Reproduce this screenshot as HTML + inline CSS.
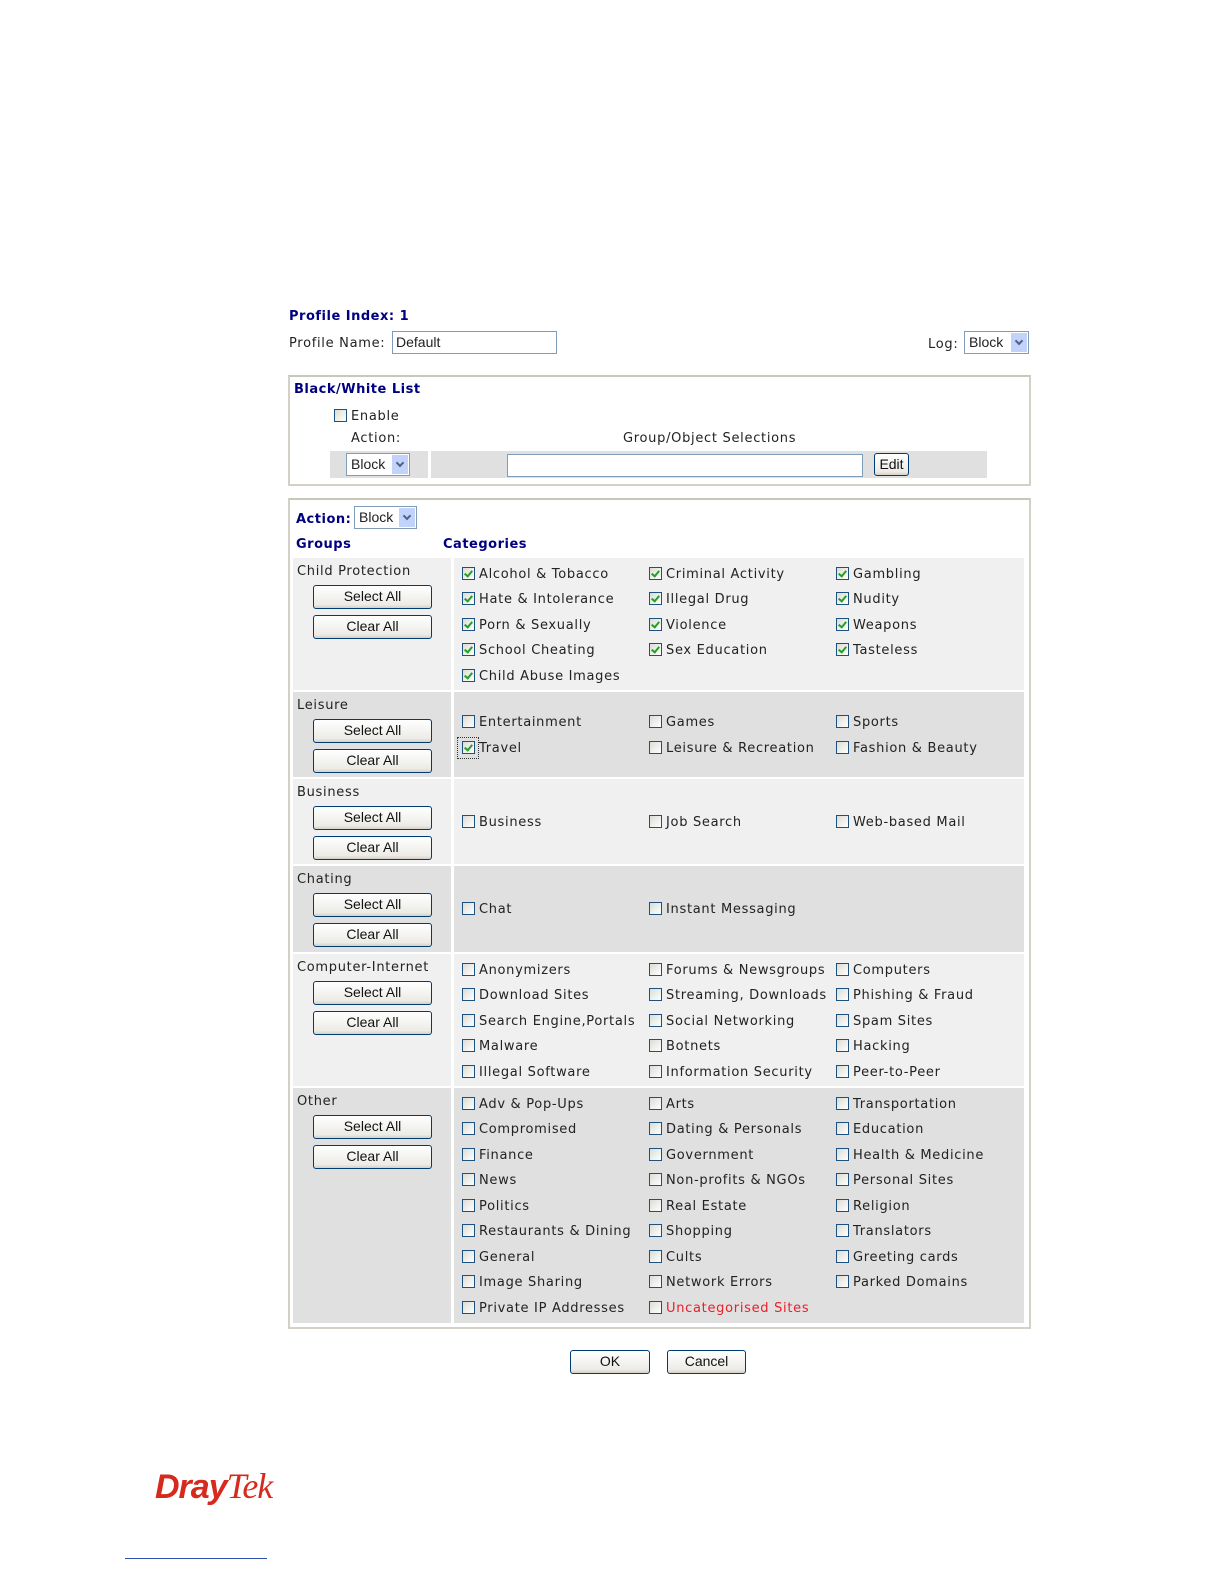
<!DOCTYPE html>
<html><head><meta charset="utf-8"><style>
*{margin:0;padding:0;box-sizing:border-box}
html,body{width:1224px;height:1584px;overflow:hidden}
body{background:#fff;position:relative;font-family:"DejaVu Sans","Liberation Sans",sans-serif;font-size:13px;color:#222;letter-spacing:0.7px}
.a{position:absolute;white-space:nowrap;line-height:18px}
.h{color:#000080;font-weight:bold;letter-spacing:0.5px}
.cb{display:inline-block;width:13px;height:13px;border:1px solid #1c5180;background:linear-gradient(135deg,#dcdcd6,#fff);vertical-align:-2px;margin-right:4px;position:relative}
.ck::after{content:"";position:absolute;left:3px;top:1px;width:3px;height:6px;border:solid #21a121;border-width:0 2px 2px 0;transform:rotate(40deg)}
.btn{position:absolute;border:1px solid #003c74;border-radius:3px;background:linear-gradient(#fff,#ecebe6 85%,#d6d0c5);font-family:"Liberation Sans",sans-serif;font-size:14px;text-align:center;line-height:20px;color:#111;letter-spacing:0}
.sel{position:absolute;border:1px solid #7f9db9;background:#fff;font-family:"Liberation Sans",sans-serif;font-size:14px;line-height:20px;padding-left:4px;letter-spacing:0}
.sel i{position:absolute;right:1px;top:1px;width:16px;bottom:1px;background:#c1d3fb}
.sel i::after{content:"";position:absolute;left:5px;top:5px;width:4px;height:4px;border:solid #4d6185;border-width:0 2px 2px 0;transform:rotate(45deg)}
.inp{position:absolute;border:1px solid #7f9db9;background:#fff;font-family:"Liberation Sans",sans-serif;font-size:14px;line-height:20px;padding-left:3px;letter-spacing:0}
.bg{position:absolute}
</style></head><body>
<div class="a h" style="left:289px;top:308px">Profile Index: 1</div>
<div class="a" style="left:289px;top:335px">Profile Name:</div>
<div class="inp" style="left:392px;top:331px;width:165px;height:23px">Default</div>
<div class="a" style="left:928px;top:336px">Log:</div>
<div class="sel" style="left:964px;top:331px;width:65px;height:23px">Block<i></i></div>

<div class="bg" style="left:288px;top:375px;width:743px;height:111px;border:2px solid #d4d0c8;border-top-color:#c8c8b8"></div>
<div class="a h" style="left:294px;top:381px">Black/White List</div>
<div class="a" style="left:334px;top:408px"><span class="cb"></span>Enable</div>
<div class="a" style="left:351px;top:430px">Action:</div>
<div class="a" style="left:623px;top:430px">Group/Object Selections</div>
<div class="bg" style="left:330px;top:451px;width:98px;height:27px;background:#e0e0e0"></div>
<div class="bg" style="left:431px;top:451px;width:556px;height:27px;background:#e0e0e0"></div>
<div class="sel" style="left:346px;top:453px;width:64px;height:23px">Block<i></i></div>
<div class="inp" style="left:507px;top:454px;width:356px;height:23px"></div>
<div class="btn" style="left:874px;top:453px;width:35px;height:23px;font-size:14px">Edit</div>

<div class="bg" style="left:288px;top:498px;width:743px;height:831px;border:2px solid #d4d0c8;border-top-color:#c8c8b8"></div>
<div class="a h" style="left:296px;top:511px">Action:</div>
<div class="sel" style="left:354px;top:506px;width:63px;height:23px">Block<i></i></div>
<div class="a h" style="left:296px;top:536px">Groups</div>
<div class="a h" style="left:443px;top:536px">Categories</div>

<div class="bg" style="left:293px;top:558px;width:158px;height:132px;background:#f0f0f0"></div>
<div class="bg" style="left:454px;top:558px;width:570px;height:132px;background:#f0f0f0"></div>
<div class="bg" style="left:293px;top:692px;width:158px;height:85px;background:#e0e0e0"></div>
<div class="bg" style="left:454px;top:692px;width:570px;height:85px;background:#e0e0e0"></div>
<div class="bg" style="left:293px;top:779px;width:158px;height:85px;background:#f0f0f0"></div>
<div class="bg" style="left:454px;top:779px;width:570px;height:85px;background:#f0f0f0"></div>
<div class="bg" style="left:293px;top:866px;width:158px;height:86px;background:#e0e0e0"></div>
<div class="bg" style="left:454px;top:866px;width:570px;height:86px;background:#e0e0e0"></div>
<div class="bg" style="left:293px;top:954px;width:158px;height:132px;background:#f0f0f0"></div>
<div class="bg" style="left:454px;top:954px;width:570px;height:132px;background:#f0f0f0"></div>
<div class="bg" style="left:293px;top:1088px;width:158px;height:235px;background:#e0e0e0"></div>
<div class="bg" style="left:454px;top:1088px;width:570px;height:235px;background:#e0e0e0"></div>

<div class="a" style="left:297px;top:563px">Child Protection</div>
<div class="btn" style="left:313px;top:585px;width:119px;height:24px">Select All</div>
<div class="btn" style="left:313px;top:615px;width:119px;height:24px">Clear All</div>
<div class="a" style="left:297px;top:697px">Leisure</div>
<div class="btn" style="left:313px;top:719px;width:119px;height:24px">Select All</div>
<div class="btn" style="left:313px;top:749px;width:119px;height:24px">Clear All</div>
<div class="a" style="left:297px;top:784px">Business</div>
<div class="btn" style="left:313px;top:806px;width:119px;height:24px">Select All</div>
<div class="btn" style="left:313px;top:836px;width:119px;height:24px">Clear All</div>
<div class="a" style="left:297px;top:871px">Chating</div>
<div class="btn" style="left:313px;top:893px;width:119px;height:24px">Select All</div>
<div class="btn" style="left:313px;top:923px;width:119px;height:24px">Clear All</div>
<div class="a" style="left:297px;top:959px">Computer-Internet</div>
<div class="btn" style="left:313px;top:981px;width:119px;height:24px">Select All</div>
<div class="btn" style="left:313px;top:1011px;width:119px;height:24px">Clear All</div>
<div class="a" style="left:297px;top:1093px">Other</div>
<div class="btn" style="left:313px;top:1115px;width:119px;height:24px">Select All</div>
<div class="btn" style="left:313px;top:1145px;width:119px;height:24px">Clear All</div>

<div class="a" style="left:462px;top:566px"><span class="cb ck"></span>Alcohol &amp; Tobacco</div>
<div class="a" style="left:649px;top:566px"><span class="cb ck"></span>Criminal Activity</div>
<div class="a" style="left:836px;top:566px"><span class="cb ck"></span>Gambling</div>
<div class="a" style="left:462px;top:591px"><span class="cb ck"></span>Hate &amp; Intolerance</div>
<div class="a" style="left:649px;top:591px"><span class="cb ck"></span>Illegal Drug</div>
<div class="a" style="left:836px;top:591px"><span class="cb ck"></span>Nudity</div>
<div class="a" style="left:462px;top:617px"><span class="cb ck"></span>Porn &amp; Sexually</div>
<div class="a" style="left:649px;top:617px"><span class="cb ck"></span>Violence</div>
<div class="a" style="left:836px;top:617px"><span class="cb ck"></span>Weapons</div>
<div class="a" style="left:462px;top:642px"><span class="cb ck"></span>School Cheating</div>
<div class="a" style="left:649px;top:642px"><span class="cb ck"></span>Sex Education</div>
<div class="a" style="left:836px;top:642px"><span class="cb ck"></span>Tasteless</div>
<div class="a" style="left:462px;top:668px"><span class="cb ck"></span>Child Abuse Images</div>
<div class="a" style="left:462px;top:714px"><span class="cb"></span>Entertainment</div>
<div class="a" style="left:649px;top:714px"><span class="cb"></span>Games</div>
<div class="a" style="left:836px;top:714px"><span class="cb"></span>Sports</div>
<div class="bg" style="left:457px;top:737px;width:22px;height:22px;border:1px dotted #333"></div>
<div class="a" style="left:462px;top:740px"><span class="cb ck"></span>Travel</div>
<div class="a" style="left:649px;top:740px"><span class="cb"></span>Leisure &amp; Recreation</div>
<div class="a" style="left:836px;top:740px"><span class="cb"></span>Fashion &amp; Beauty</div>
<div class="a" style="left:462px;top:814px"><span class="cb"></span>Business</div>
<div class="a" style="left:649px;top:814px"><span class="cb"></span>Job Search</div>
<div class="a" style="left:836px;top:814px"><span class="cb"></span>Web-based Mail</div>
<div class="a" style="left:462px;top:901px"><span class="cb"></span>Chat</div>
<div class="a" style="left:649px;top:901px"><span class="cb"></span>Instant Messaging</div>
<div class="a" style="left:462px;top:962px"><span class="cb"></span>Anonymizers</div>
<div class="a" style="left:649px;top:962px"><span class="cb"></span>Forums &amp; Newsgroups</div>
<div class="a" style="left:836px;top:962px"><span class="cb"></span>Computers</div>
<div class="a" style="left:462px;top:987px"><span class="cb"></span>Download Sites</div>
<div class="a" style="left:649px;top:987px"><span class="cb"></span>Streaming, Downloads</div>
<div class="a" style="left:836px;top:987px"><span class="cb"></span>Phishing &amp; Fraud</div>
<div class="a" style="left:462px;top:1013px"><span class="cb"></span>Search Engine,Portals</div>
<div class="a" style="left:649px;top:1013px"><span class="cb"></span>Social Networking</div>
<div class="a" style="left:836px;top:1013px"><span class="cb"></span>Spam Sites</div>
<div class="a" style="left:462px;top:1038px"><span class="cb"></span>Malware</div>
<div class="a" style="left:649px;top:1038px"><span class="cb"></span>Botnets</div>
<div class="a" style="left:836px;top:1038px"><span class="cb"></span>Hacking</div>
<div class="a" style="left:462px;top:1064px"><span class="cb"></span>Illegal Software</div>
<div class="a" style="left:649px;top:1064px"><span class="cb"></span>Information Security</div>
<div class="a" style="left:836px;top:1064px"><span class="cb"></span>Peer-to-Peer</div>
<div class="a" style="left:462px;top:1096px"><span class="cb"></span>Adv &amp; Pop-Ups</div>
<div class="a" style="left:649px;top:1096px"><span class="cb"></span>Arts</div>
<div class="a" style="left:836px;top:1096px"><span class="cb"></span>Transportation</div>
<div class="a" style="left:462px;top:1121px"><span class="cb"></span>Compromised</div>
<div class="a" style="left:649px;top:1121px"><span class="cb"></span>Dating &amp; Personals</div>
<div class="a" style="left:836px;top:1121px"><span class="cb"></span>Education</div>
<div class="a" style="left:462px;top:1147px"><span class="cb"></span>Finance</div>
<div class="a" style="left:649px;top:1147px"><span class="cb"></span>Government</div>
<div class="a" style="left:836px;top:1147px"><span class="cb"></span>Health &amp; Medicine</div>
<div class="a" style="left:462px;top:1172px"><span class="cb"></span>News</div>
<div class="a" style="left:649px;top:1172px"><span class="cb"></span>Non-profits &amp; NGOs</div>
<div class="a" style="left:836px;top:1172px"><span class="cb"></span>Personal Sites</div>
<div class="a" style="left:462px;top:1198px"><span class="cb"></span>Politics</div>
<div class="a" style="left:649px;top:1198px"><span class="cb"></span>Real Estate</div>
<div class="a" style="left:836px;top:1198px"><span class="cb"></span>Religion</div>
<div class="a" style="left:462px;top:1223px"><span class="cb"></span>Restaurants &amp; Dining</div>
<div class="a" style="left:649px;top:1223px"><span class="cb"></span>Shopping</div>
<div class="a" style="left:836px;top:1223px"><span class="cb"></span>Translators</div>
<div class="a" style="left:462px;top:1249px"><span class="cb"></span>General</div>
<div class="a" style="left:649px;top:1249px"><span class="cb"></span>Cults</div>
<div class="a" style="left:836px;top:1249px"><span class="cb"></span>Greeting cards</div>
<div class="a" style="left:462px;top:1274px"><span class="cb"></span>Image Sharing</div>
<div class="a" style="left:649px;top:1274px"><span class="cb"></span>Network Errors</div>
<div class="a" style="left:836px;top:1274px"><span class="cb"></span>Parked Domains</div>
<div class="a" style="left:462px;top:1300px"><span class="cb"></span>Private IP Addresses</div>
<div class="a" style="left:649px;top:1300px"><span class="cb"></span><span style="color:#e8202a">Uncategorised Sites</span></div>

<div class="btn" style="left:570px;top:1350px;width:80px;height:24px">OK</div>
<div class="btn" style="left:667px;top:1350px;width:79px;height:24px">Cancel</div>

<div class="a" style="left:155px;top:1466px;line-height:40px;font-family:'Liberation Sans',sans-serif;font-weight:bold;font-style:italic;font-size:34px;color:#d62a1e;letter-spacing:-1px">Dray<span style="font-weight:normal;font-family:'Liberation Serif',serif;font-size:36px">Tek</span></div>
<div class="bg" style="left:125px;top:1558px;width:142px;height:1px;background:#3050b0"></div>
</body></html>
